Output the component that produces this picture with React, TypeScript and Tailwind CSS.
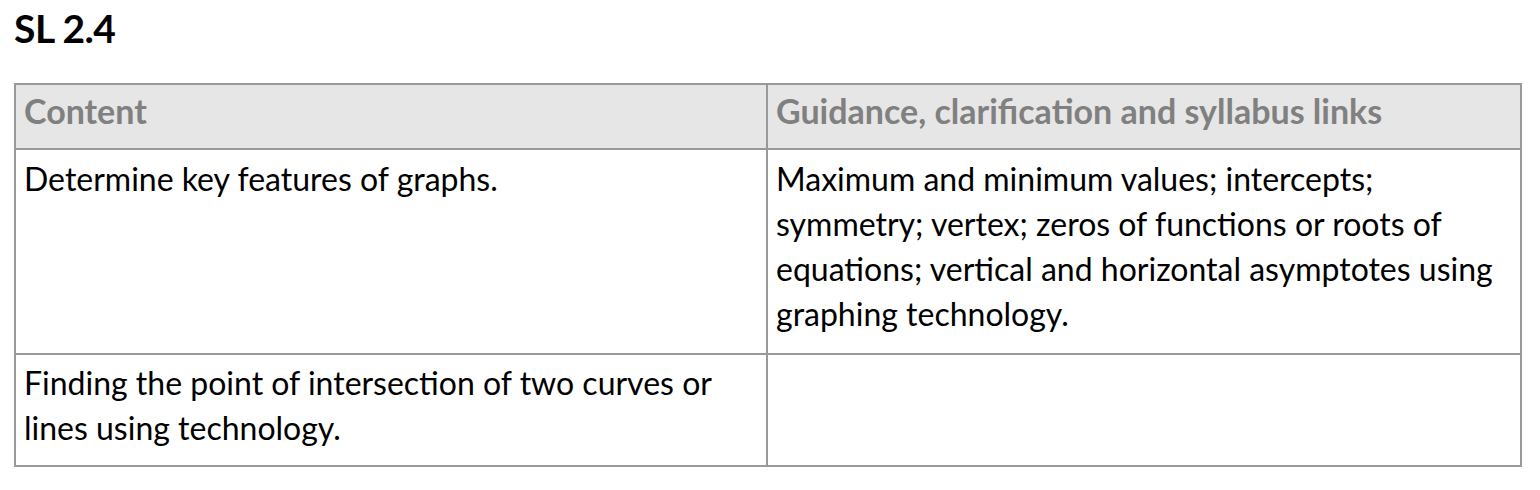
const rows = [
  {
    content: "Determine key features of graphs.",
    guidance:
      "Maximum and minimum values; intercepts; symmetry; vertex; zeros of functions or roots of equations; vertical and horizontal asymptotes using graphing technology.",
    pad: "pt-[6px] pb-[17px]",
  },
  {
    content: "Finding the point of intersection of two curves or lines using technology.",
    guidance: "",
    pad: "pt-[5px] pb-[15px]",
  },
];

export default function App() {
  return (
    <div className="min-h-screen bg-white px-[14px] pt-[6px] font-['Lato','Liberation_Sans',sans-serif] text-black">
      <h1 className="text-[39px] font-bold leading-[44px] tracking-[-0.5px]">SL 2.4</h1>

      <table className="mt-[33px] w-[1508px] table-fixed border-collapse border-2 border-[#999]">
        <colgroup>
          <col className="w-[752px]" />
          <col />
        </colgroup>
        <thead>
          <tr className="bg-[#e6e6e6]">
            <th className="border-2 border-[#999] px-[8px] pt-[3px] pb-[15px] text-left align-top text-[34px] font-bold leading-[45px] text-[#808080]">
              Content
            </th>
            <th className="border-2 border-[#999] px-[8px] pt-[3px] pb-[15px] text-left align-top text-[34px] font-bold leading-[45px] text-[#808080]">
              Guidance, clarification and syllabus links
            </th>
          </tr>
        </thead>
        <tbody>
          {rows.map((r, i) => (
            <tr key={i}>
              <td className={`border-2 border-[#999] px-[8px] align-top text-[32px] leading-[45px] ${r.pad}`}>
                {r.content}
              </td>
              <td className={`border-2 border-[#999] px-[8px] align-top text-[32px] leading-[45px] ${r.pad}`}>
                {r.guidance}
              </td>
            </tr>
          ))}
        </tbody>
      </table>
    </div>
  );
}
